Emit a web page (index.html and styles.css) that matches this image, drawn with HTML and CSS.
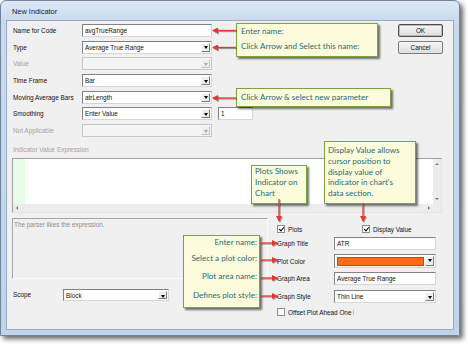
FILE: index.html
```html
<!DOCTYPE html>
<html lang="en">
<head>
    <meta charset="UTF-8">
    <title>New Indicator</title>
    <link rel="stylesheet" href="styles.css">
</head>
<body>
    <div class="screen">
        <div class="window">
            <div class="titlebar">New Indicator</div>
            <div class="client">
                <div class="top-form">
                    <span class="lbl">Name for Code</span>
                    <span class="field">avgTrueRange</span>
                    <span class="btn btn-default">OK</span>

                    <span class="lbl">Type</span>
                    <span class="combo"><span class="combo-text">Average True Range</span><span class="drop"></span></span>
                    <span class="btn">Cancel</span>

                    <span class="lbl off">Value</span>
                    <span class="combo off"><span class="combo-text"></span><span class="drop"></span></span>

                    <span class="lbl">Time Frame</span>
                    <span class="combo"><span class="combo-text">Bar</span><span class="drop"></span></span>

                    <span class="lbl">Moving Average Bars</span>
                    <span class="combo"><span class="combo-text">atrLength</span><span class="drop"></span></span>

                    <span class="lbl">Smoothing</span>
                    <span class="combo"><span class="combo-text">Enter Value</span><span class="drop"></span></span>
                    <span class="field extra">1</span>

                    <span class="lbl off">Not Applicable</span>
                    <span class="combo off"><span class="combo-text"></span><span class="drop"></span></span>
                </div>

                <div class="expr-label off">Indicator Value Expression</div>
                <div class="expr">
                    <div class="code"></div>
                    <div class="vscroll"><span class="tri up"></span><span class="tri down"></span></div>
                    <div class="hscroll"><span class="tri left"></span><span class="tri right"></span></div>
                    <div class="corner"></div>
                </div>

                <div class="bottom">
                    <div class="left-col">
                        <div class="status">The parser likes the expression.</div>
                        <div class="scope-row">
                            <span class="lbl scope-lbl">Scope</span>
                            <span class="combo scope"><span class="combo-text">Block</span><span class="drop"></span></span>
                        </div>
                    </div>
                    <div class="right-col">
                        <div class="checks">
                            <span class="check-item plots"><span class="cb on"></span>Plots</span>
                            <span class="check-item"><span class="cb on"></span>Display Value</span>
                        </div>
                        <div class="graph-form">
                            <span class="lbl">Graph Title</span>
                            <span class="field">ATR</span>
                            <span class="lbl">Plot Color</span>
                            <span class="combo color"><span class="swatch"></span><span class="drop"></span></span>
                            <span class="lbl">Graph Area</span>
                            <span class="field">Average True Range</span>
                            <span class="lbl">Graph Style</span>
                            <span class="combo"><span class="combo-text">Thin Line</span><span class="drop"></span></span>
                        </div>
                        <div class="check-item offset"><span class="cb"></span><span class="clip">Offset Plot Ahead One Ba</span></div>
                    </div>
                </div>
            </div>
        </div>

        <!-- annotation callouts -->
        <div class="callout c-name"><p>Enter name:</p><p>Click Arrow and Select this name:</p></div>
        <div class="callout c-param"><p>Click Arrow &amp; select new parameter</p></div>
        <div class="callout c-plots"><p>Plots Shows</p><p>Indicator on</p><p>Chart</p></div>
        <div class="callout c-display"><p>Display Value allows</p><p>cursor position to</p><p>display value of</p><p>indicator in chart's</p><p>data section.</p></div>
        <div class="callout c-graph"><p>Enter name:</p><p>Select a plot color:</p><p>Plot area name:</p><p>Defines plot style:</p></div>

        <svg class="arrows" width="468" height="344" viewBox="0 0 468 344">
            <defs>
                <marker id="ah" markerWidth="6" markerHeight="6" refX="5" refY="3" orient="auto" markerUnits="userSpaceOnUse">
                    <path d="M0,0 L6,3 L0,6 z" fill="#e5372d"/>
                </marker>
            </defs>
            <g stroke="#e5372d" stroke-width="1.3" fill="none" marker-end="url(#ah)">
                <path d="M236 30.5 H213"/>
                <path d="M236 47.5 H213"/>
                <path d="M236 98 H213"/>
                <path d="M279 199 V221"/>
                <path d="M363 203 V221"/>
                <path d="M260 243 H277"/>
                <path d="M260 260 H277"/>
                <path d="M260 278 H277"/>
                <path d="M260 296 H277"/>
            </g>
        </svg>
    </div>
</body>
</html>
```

FILE: styles.css
```css
* {
    margin: 0;
    padding: 0;
    box-sizing: border-box;
}

body {
    background: #fff;
    font-family: 'Liberation Sans', Arial, sans-serif;
    font-size: 6.4px;
    color: #111;
}

.screen {
    position: relative;
    width: 468px;
    height: 344px;
    overflow: hidden;
}

.window {
    width: 460px;
    height: 336px;
    border: 1px solid #70839a;
    border-radius: 6px 6px 0 0;
    background: linear-gradient(#dde8f5, #c9daee 20px, #bfd3ea);
    box-shadow: 3px 3px 5px rgba(0, 0, 0, 0.6);
    padding: 0 5px 5px;
    display: flex;
    flex-direction: column;
}

.titlebar {
    height: 19px;
    line-height: 22px;
    padding-left: 6px;
    font-size: 7.4px;
    color: #1b1b1b;
}

.client {
    flex: 1;
    background: #f0f0f0;
    border: 1px solid #98aac0;
    padding: 3px 10px 0 5px;
    display: flex;
    flex-direction: column;
}

.lbl {
    padding-left: 1px;
    line-height: 13px;
    white-space: nowrap;
}

.off {
    color: #a3a3a3;
}

/* inputs */
.field,
.combo {
    height: 13px;
    background: #fff;
    border: 1px solid;
    border-color: #828282 #d6d6d6 #d6d6d6 #828282;
    line-height: 11px;
    padding-left: 2px;
    white-space: nowrap;
    overflow: hidden;
}

.combo {
    display: flex;
    padding-right: 1px;
}

.combo-text {
    flex: 1;
}

.drop {
    width: 9px;
    height: 9px;
    margin-top: 1px;
    background: #ededed;
    border: 1px solid;
    border-color: #fff #7a7a7a #7a7a7a #fff;
    position: relative;
}

.drop::after {
    content: '';
    position: absolute;
    left: 1.5px;
    top: 2.5px;
    border-left: 2.5px solid transparent;
    border-right: 2.5px solid transparent;
    border-top: 3px solid #000;
}

.combo.off {
    background: #f4f4f4;
    border-color: #c6c6c6;
}

.combo.off .drop {
    border-color: #f7f7f7 #c2c2c2 #c2c2c2 #f7f7f7;
}

.combo.off .drop::after {
    border-top-color: #a8a8a8;
}

.btn {
    height: 13px;
    line-height: 11px;
    text-align: center;
    border: 1px solid #7c7c7c;
    border-radius: 2px;
    background: linear-gradient(#f6f6f6, #dedede);
}

.btn-default {
    border-color: #4f4f4f;
    box-shadow: inset 0 0 0 1px #b9b9b9;
}

/* top section */
.top-form {
    display: grid;
    grid-template-columns: 70px 130px 1fr 45px;
    grid-auto-rows: 13px;
    row-gap: 3.7px;
}

.top-form .lbl {
    grid-column: 1;
}

.top-form .combo,
.top-form .field {
    grid-column: 2;
}

.top-form .btn {
    grid-column: 4;
}

.top-form .extra {
    grid-column: 3;
    width: 35px;
    margin-left: 6px;
}

.expr-label {
    margin-top: 8px;
    padding-left: 1px;
    line-height: 10px;
}

.expr {
    margin-top: 3px;
    margin-right: 1px;
    height: 55px;
    border: 1px solid;
    border-color: #a0a0a0 #e4e4e4 #e4e4e4 #a0a0a0;
    display: grid;
    grid-template-columns: 1fr 8px;
    grid-template-rows: 1fr 8px;
}

.code {
    background: linear-gradient(to right, #e8fde8 12px, #fff 12px);
}

.vscroll,
.hscroll,
.corner {
    background: #ececec;
    position: relative;
}

.tri {
    position: absolute;
    width: 0;
    height: 0;
}

.tri.up {
    left: 2px;
    top: 4px;
    border-left: 2px solid transparent;
    border-right: 2px solid transparent;
    border-bottom: 2px solid #7a7a7a;
}

.tri.down {
    left: 2px;
    bottom: 4px;
    border-left: 2px solid transparent;
    border-right: 2px solid transparent;
    border-top: 2px solid #7a7a7a;
}

.tri.left {
    left: 3px;
    top: 2px;
    border-top: 2px solid transparent;
    border-bottom: 2px solid transparent;
    border-right: 2px solid #7a7a7a;
}

.tri.right {
    right: 3px;
    top: 2px;
    border-top: 2px solid transparent;
    border-bottom: 2px solid transparent;
    border-left: 2px solid #7a7a7a;
}

/* bottom section */
.bottom {
    margin-top: 5px;
    display: grid;
    grid-template-columns: 256px 1fr;
    column-gap: 8px;
}

.status {
    height: 61px;
    border: 1px solid;
    border-color: #a6a6a6 #fbfbfb #fbfbfb #a6a6a6;
    color: #8e8e8e;
    padding-left: 1px;
    line-height: 12px;
}

.scope-row {
    margin-top: 10px;
    display: flex;
}

.scope-lbl {
    width: 51px;
    line-height: 12px;
}

.combo.scope {
    width: 106px;
    height: 12px;
}

.combo.scope .drop {
    height: 8px;
}

.right-col {
    padding-top: 6px;
}

.checks {
    display: flex;
    height: 10px;
}

.check-item {
    display: flex;
    align-items: center;
    gap: 3px;
    padding-left: 1px;
    white-space: nowrap;
}

.check-item.plots {
    width: 85px;
}

.cb {
    width: 8px;
    height: 8px;
    background: #fff;
    border: 1px solid #8c8c8c;
    position: relative;
}

.cb.on::after {
    content: '';
    position: absolute;
    left: 1.5px;
    top: 0;
    width: 2px;
    height: 4px;
    border-right: 1.5px solid #000;
    border-bottom: 1.5px solid #000;
    transform: rotate(40deg);
}

.graph-form {
    margin-top: 3px;
    display: grid;
    grid-template-columns: 58px 102px;
    grid-auto-rows: 13px;
    row-gap: 4.67px;
}

.combo.color {
    height: 14px;
    padding: 2px 1px 1px 2px;
    margin-top: -1px;
}

.swatch {
    flex: 1;
    background: #ff6a1c;
    border: 1px solid #c24a10;
    margin-right: 1px;
}

.combo.color .drop {
    margin-top: -1px;
    height: 10px;
}

.offset {
    margin-top: 5px;
    height: 8px;
}

.clip {
    width: 66px;
    overflow: hidden;
}

/* annotation callouts */
.callout {
    position: absolute;
    background: #fcfcdc;
    border: 1.5px solid #7aa53d;
    box-shadow: 2px 2px 2px rgba(0, 0, 0, 0.55);
    color: #2a6b75;
    font-family: Lato, 'Open Sans', sans-serif;
    font-size: 8.1px;
    white-space: nowrap;
}

.c-name {
    left: 236px;
    top: 23px;
    width: 142px;
    height: 34px;
    line-height: 15px;
    padding-left: 4px;
}

.c-param {
    left: 236px;
    top: 88px;
    width: 155px;
    height: 19px;
    line-height: 16px;
    padding-left: 4px;
}

.c-plots {
    left: 251px;
    top: 165px;
    width: 56px;
    height: 39px;
    line-height: 11px;
    padding-left: 3px;
}

.c-display {
    left: 324px;
    top: 141px;
    width: 92px;
    height: 63px;
    line-height: 10.75px;
    padding: 3px 0 0 3px;
}

.c-graph {
    left: 183px;
    top: 235px;
    width: 77px;
    height: 73px;
    text-align: right;
    padding-right: 2px;
}

.c-graph p {
    height: 18.3px;
    line-height: 18.3px;
}

.c-graph p:first-child {
    height: 13px;
    line-height: 13px;
}

.arrows {
    position: absolute;
    left: 0;
    top: 0;
    pointer-events: none;
    filter: drop-shadow(1px 1px 0.6px rgba(0, 0, 0, 0.35));
}
```
